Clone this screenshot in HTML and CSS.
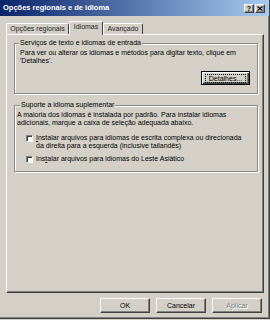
FILE: index.html
```html
<!DOCTYPE html>
<html lang="pt">
<head>
<meta charset="utf-8">
<title>Opções regionais e de idioma</title>
<link rel="stylesheet" href="styles.css">
</head>
<body>
<div class="window">
  <div class="titlebar">
    <span class="title">Opções regionais e de idioma</span>
    <div class="ctrls">
      <span class="cbtn help">?</span>
      <span class="cbtn close"><svg width="6" height="5" viewBox="0 0 6 5"><path d="M0.5 0.5 L5.5 4.5 M5.5 0.5 L0.5 4.5" stroke="#000" stroke-width="1.2" fill="none"/></svg></span>
    </div>
  </div>
  <div class="content">
    <div class="tabs">
      <div class="tab tab-regional">Opções regionais</div>
      <div class="tab tab-idiomas active">Idiomas</div>
      <div class="tab tab-avancado">Avançado</div>
    </div>
    <div class="panel">
      <fieldset class="group g1">
        <legend>Serviços de texto e idiomas de entrada</legend>
        <p class="txt">Para ver ou alterar os idiomas e métodos para digitar texto, clique em<br>'Detalhes'.</p>
        <div class="row-right"><button class="btn default"><span class="focus">Detalhes...</span></button></div>
      </fieldset>
      <fieldset class="group g2">
        <legend>Suporte a idioma suplementar</legend>
        <p class="txt">A maioria dos idiomas é instalada por padrão. Para instalar idiomas<br>adicionais, marque a caixa de seleção adequada abaixo.</p>
        <label class="check c1"><span class="box"></span><span class="ctext"><u>I</u>nstalar arquivos para idiomas de escrita complexa ou direcionada<br>da direita para a esquerda (inclusive tailandês)</span></label>
        <label class="check c2"><span class="box"></span><span class="ctext">Ins<u>t</u>alar arquivos para idiomas do Leste Asiático</span></label>
      </fieldset>
    </div>
    <div class="buttons">
      <button class="btn">OK</button>
      <button class="btn">Cancelar</button>
      <button class="btn disabled" disabled>Aplicar</button>
    </div>
  </div>
</div>
</body>
</html>
```
FILE: styles.css
```css
* { box-sizing: border-box; }
html, body { margin: 0; padding: 0; }
body {
  width: 270px;
  height: 320px;
  overflow: hidden;
  background: #d4d0c8;
  font-family: "Liberation Sans", Arial, sans-serif;
  font-size: 7px;
  line-height: 8px;
  color: #000;
}
.window {
  width: 270px;
  height: 319px;
  background: #d4d0c8;
  border-right: 1px solid #404040;
  border-bottom: 1px solid #404040;
  box-shadow: inset -1px -1px #808080;
  display: flex;
  flex-direction: column;
}
.titlebar {
  height: 16px;
  background: linear-gradient(to right, #0a246a, #a6caf0);
  display: flex;
  align-items: center;
  justify-content: space-between;
  padding: 0 4px 0 3px;
}
.title {
  color: #fff;
  font-weight: bold;
  font-size: 7.5px;
  white-space: nowrap;
}
.ctrls { display: flex; gap: 1px; }
.cbtn {
  width: 10px;
  height: 9px;
  background: #d4d0c8;
  border: 1px solid;
  border-color: #fff #404040 #404040 #fff;
  box-shadow: inset -1px -1px #808080;
  display: flex;
  align-items: center;
  justify-content: center;
  font-weight: bold;
  font-size: 7px;
  line-height: 7px;
}
.content {
  flex: 1;
  display: flex;
  flex-direction: column;
  padding: 5px 0 0 6px;
}
.tabs {
  display: flex;
  align-items: flex-end;
  height: 13px;
}
.tab {
  height: 11px;
  border: 1px solid;
  border-bottom: none;
  border-color: #fff #404040 transparent #fff;
  border-radius: 2px 2px 0 0;
  text-align: center;
  line-height: 9px;
  white-space: nowrap;
  color: #222;
}
.tab-regional { width: 63px; }
.tab-idiomas { width: 34px; }
.tab-avancado { width: 40px; }
.tab.active {
  height: 14px;
  margin-bottom: -1px;
  position: relative;
  z-index: 1;
  background: #d4d0c8;
  line-height: 10px;
}
.panel {
  width: 258px;
  height: 259px;
  border: 1px solid;
  border-color: #fff #404040 #404040 #fff;
  box-shadow: inset -1px -1px #808080;
  padding: 4px 5px 0 7px;
}
.group {
  margin: 0;
  min-width: 0;
  border: 1px solid #8c8a84;
  box-shadow: inset 1px 1px #fff, 1px 1px #fff;
}
.group legend {
  padding: 0 1px;
  line-height: 8px;
  background: #d4d0c8;
  white-space: nowrap;
}
.g1 { padding: 2px 7px 8px 5px; }
.g1 legend { margin-left: -1px; }
.g2 { margin-top: 7px; padding: 2px 5px 8px 2px; }
.g2 legend { margin-left: 3px; }
.txt { margin: 0; white-space: nowrap; }
.row-right {
  display: flex;
  justify-content: flex-end;
  margin-top: 6px;
}
.btn {
  width: 50px;
  height: 15px;
  padding: 0;
  background: #d4d0c8;
  border: 1px solid;
  border-color: #fff #404040 #404040 #fff;
  box-shadow: inset -1px -1px #808080;
  font: inherit;
  color: #000;
  display: flex;
  align-items: center;
  justify-content: center;
}
.btn.default {
  width: 49px;
  height: 14px;
  border: 1px solid #000;
  box-shadow: inset 1px 1px #fff, inset -1px -1px #404040, inset -2px -2px #808080;
}
.focus {
  outline: 1px dotted #000;
  padding: 0 3px;
  line-height: 7px;
}
.check {
  display: flex;
  align-items: flex-start;
  margin-left: 9px;
  gap: 3px;
}
.c1 { margin-top: 7px; }
.c2 { margin-top: 5px; }
.box {
  flex: none;
  width: 7px;
  height: 7px;
  margin-top: 1px;
  background: #fff;
  border: 1px solid;
  border-color: #808080 #fff #fff #808080;
  box-shadow: inset 1px 1px #404040;
}
.ctext { white-space: nowrap; }
.buttons {
  display: flex;
  justify-content: flex-end;
  gap: 6px;
  margin-top: 5px;
  padding-right: 7px;
}
.btn.disabled {
  color: #808080;
  text-shadow: 1px 1px #fff;
}
```
